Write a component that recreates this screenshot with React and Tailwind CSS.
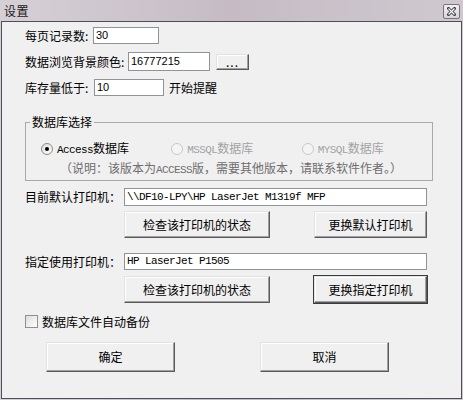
import React from "react"

const cjk = { fontFamily: '"Noto Sans CJK SC", "Noto Sans", sans-serif' }
const mono = { fontFamily: '"Liberation Mono", "Noto Sans CJK SC", monospace' }
const digits = { fontFamily: '"Liberation Sans", Arial, sans-serif' }

function TextBox({ value, className = "", font = digits }) {
  return (
    <div
      className={`flex items-center h-full bg-white border border-[#8f9499] pl-[2px] text-[11px] leading-none text-black ${className}`}
      style={font}
    >
      {value}
    </div>
  )
}

function Btn({ children, className = "", focused = false }) {
  return (
    <div
      className={`flex items-center justify-center bg-[#f0f0f0] text-[12px] leading-none text-black border border-t-[#e2e2e2] border-l-[#e2e2e2] border-r-[#5a5a5a] border-b-[#5a5a5a] shadow-[inset_-1px_-1px_0_#a0a0a0,inset_1px_1px_0_#ffffff] ${
        focused ? "outline outline-1 outline-[#3c3c3c]" : ""
      } ${className}`}
    >
      {children}
    </div>
  )
}

function Radio({ checked, disabled, label }) {
  return (
    <div className="flex items-center gap-[4px] w-[145px] h-[12px]">
      <span
        className={`flex items-center justify-center w-[12px] h-[12px] rounded-full border ${
          disabled
            ? "border-[#c8c8c8] bg-[#f4f4f4]"
            : "border-[#8a8a8a] bg-gradient-to-br from-[#dcdcdc] to-[#ffffff]"
        }`}
      >
        {checked && <span className="w-[4px] h-[4px] rounded-full bg-black" />}
      </span>
      <span className={`text-[12px] leading-none ${disabled ? "text-[#a3a3a3]" : "text-black"}`}>
        <span className="text-[11px] tracking-[-0.6px]" style={mono}>
          {label[0]}
        </span>
        <span style={cjk}>{label[1]}</span>
      </span>
    </div>
  )
}

export default function App() {
  return (
    <div className="w-[463px] h-[400px] bg-gradient-to-r from-[#d6d0d6] via-[#c6bbc5] to-[#cfc9cf]" style={cjk}>
      {/* Title bar */}
      <div className="flex items-center justify-between h-[21px] pl-[4px] pr-[3px]">
        <span className="text-[12px] leading-none text-[#1a1a1a] tracking-[0.5px]">设置</span>
        <span className="flex items-center justify-center w-[17px] h-[15px] mt-[1px] rounded-[2px] border border-[#76737c] bg-gradient-to-b from-[#f2f0f2] to-[#d9d4d9]">
          <svg width="9" height="9" viewBox="0 0 9 9">
            <path d="M1.5 1.5 L7.5 7.5 M7.5 1.5 L1.5 7.5" stroke="#3a3a3a" strokeWidth="3" strokeLinecap="square" />
            <path d="M1.5 1.5 L7.5 7.5 M7.5 1.5 L1.5 7.5" stroke="#ffffff" strokeWidth="1.2" />
          </svg>
        </span>
      </div>

      {/* Body */}
      <div className="ml-[1px] w-[461px] h-[378px] border border-[#4f4d58] bg-[#f0f0f0] pl-[23px] text-[12px] leading-none text-black">
        <div className="flex items-center mt-[5px] h-[17px]">
          <span className="w-[68px]">每页记录数:</span>
          <TextBox value="30" className="w-[66px]" />
        </div>

        <div className="flex items-center mt-[8px] h-[19px]">
          <span className="w-[103px]">数据浏览背景颜色:</span>
          <TextBox value="16777215" className="w-[82px]" />
          <Btn className="ml-[6px] w-[33px] h-[16px] text-[10px] tracking-[1px]">...</Btn>
        </div>

        <div className="flex items-center mt-[8px] h-[17px]">
          <span className="w-[69px]">库存量低于:</span>
          <TextBox value="10" className="w-[70px]" />
          <span className="ml-[5px]">开始提醒</span>
        </div>

        {/* Group box */}
        <div className="relative mt-[26px] w-[408px] h-[59px] border border-[#a9a9a9]">
          <span className="absolute -top-[7px] left-[4px] px-[2px] bg-[#f0f0f0]">数据库选择</span>
          <div className="flex pt-[20px] pl-[15px]">
            <Radio checked label={["Access", "数据库"]} />
            <Radio disabled label={["MSSQL", "数据库"]} />
            <Radio disabled label={["MYSQL", "数据库"]} />
          </div>
          <div className="mt-[7px] pl-[34px] text-[#6e6e6e]">
            （说明：该版本为<span className="text-[11px] tracking-[-0.6px]" style={mono}>ACCESS</span>版，需要其他版本，请联系软件作者。）
          </div>
        </div>

        {/* Printers */}
        <div className="flex items-center mt-[7px] h-[18px]">
          <span className="w-[99px]">目前默认打印机：</span>
          <TextBox
            value={"\\\\DF10-LPY\\HP LaserJet M1319f MFP"}
            className="w-[303px] tracking-[-0.6px]"
            font={mono}
          />
        </div>
        <div className="flex mt-[5px] ml-[99px] h-[27px] gap-[44px]">
          <Btn className="w-[146px]">检查该打印机的状态</Btn>
          <Btn className="w-[113px]">更换默认打印机</Btn>
        </div>

        <div className="flex items-center mt-[15px] h-[17px]">
          <span className="w-[99px]">指定使用打印机：</span>
          <TextBox value="HP LaserJet P1505" className="w-[303px] tracking-[-0.6px]" font={mono} />
        </div>
        <div className="flex mt-[6px] ml-[99px] h-[27px] gap-[44px]">
          <Btn className="w-[146px]">检查该打印机的状态</Btn>
          <Btn className="w-[113px]" focused>
            更换指定打印机
          </Btn>
        </div>

        <div className="flex items-center mt-[12px] h-[13px] gap-[4px]">
          <span className="w-[13px] h-[13px] border border-[#8e8f8f] bg-gradient-to-br from-[#dedede] to-[#ffffff]" />
          <span>数据库文件自动备份</span>
        </div>

        <div className="flex mt-[14px] ml-[21px] h-[30px] gap-[85px]">
          <Btn className="w-[129px]">确定</Btn>
          <Btn className="w-[129px]">取消</Btn>
        </div>
      </div>
    </div>
  )
}
